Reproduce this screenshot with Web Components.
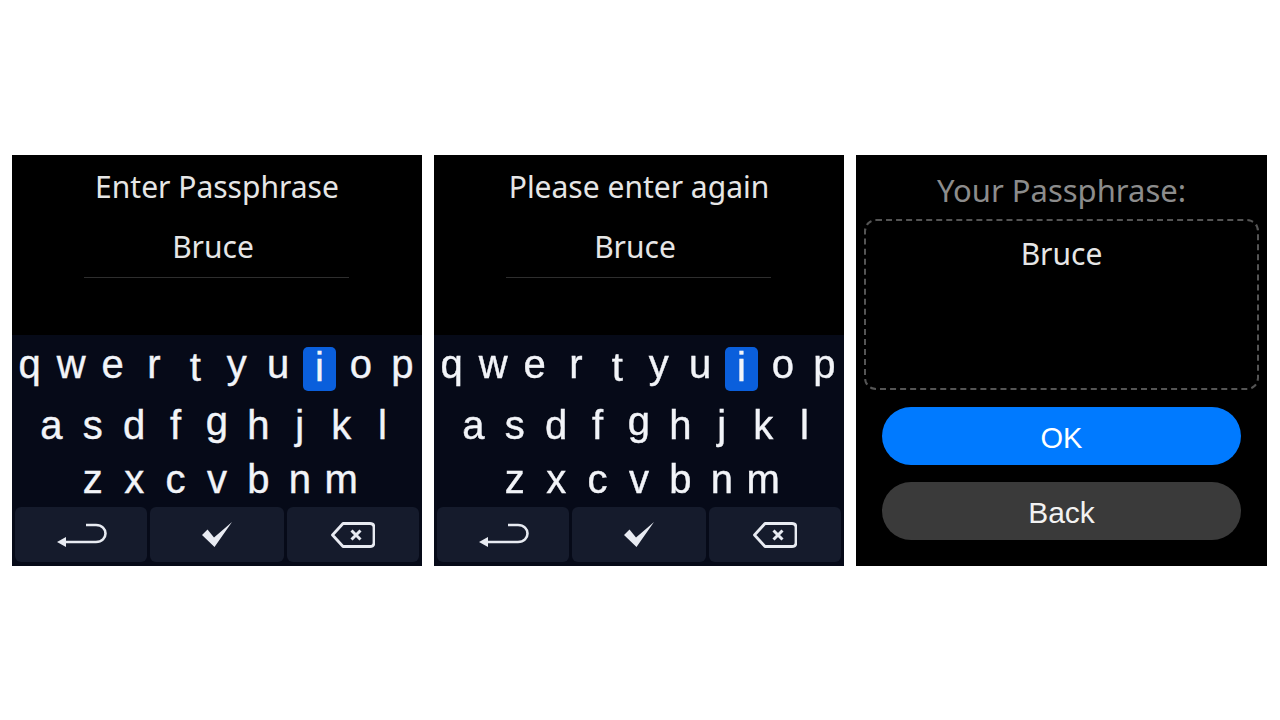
<!DOCTYPE html>
<html lang="en">
<head>
<meta charset="utf-8">
<title>Passphrase</title>
<style>
  html, body { margin: 0; height: 100%; background: #fff; }
</style>
</head>
<body>
<screen-row>
  <passphrase-entry title-text="Enter Passphrase" value="Bruce"></passphrase-entry>
  <passphrase-entry title-text="Please enter again" value="Bruce"></passphrase-entry>
  <passphrase-confirm value="Bruce"></passphrase-confirm>
</screen-row>

<script>
const TITLE_FONT = '"Noto Sans", "Open Sans", sans-serif';
const KEY_FONT = '"Liberation Sans", Arial, sans-serif';

class ScreenRow extends HTMLElement {
  constructor() {
    super();
    this.attachShadow({ mode: 'open' });
    this.shadowRoot.innerHTML = `
      <style>
        :host {
          display: grid;
          grid-template-columns: 410px 410px 411px;
          gap: 12px;
          height: 720px;
          padding: 155px 13px 154px 12px;
          box-sizing: border-box;
          /* the source is a soft video frame */
          filter: blur(0.45px);
        }
      </style>
      <slot></slot>
    `;
  }
}

class SoftKey extends HTMLElement {
  constructor() {
    super();
    this.attachShadow({ mode: 'open' });
    this.shadowRoot.innerHTML = `
      <style>
        :host {
          display: flex;
          align-items: flex-start;
          justify-content: center;
          width: 41.4px;
          flex: none;
          color: #f2f4f8;
          font: 40px/1 ${KEY_FONT};
          -webkit-text-stroke: 0.4px #f2f4f8;
        }
        span {
          display: flex;
          align-items: center;
          justify-content: center;
          width: 33px;
          height: 44px;
          padding-bottom: 10px;
          border-radius: 5px;
          box-sizing: border-box;
        }
        :host([active]) span { background: #0a5fdc; }
        /* t, i and g sit off the baseline on the device */
        :host([low]) span { padding-bottom: 5px; }
        :host([high]) span { padding-bottom: 18px; }
      </style>
      <span><slot></slot></span>
    `;
  }
}

class ActionKey extends HTMLElement {
  constructor() {
    super();
    this.attachShadow({ mode: 'open' });
    this.shadowRoot.innerHTML = `
      <style>
        :host {
          display: flex;
          align-items: center;
          justify-content: center;
          flex: 1;
          background: #151b2c;
          border-radius: 6px;
          color: #e8ebf2;
        }
        :host(:nth-child(2)) { flex-grow: 1.015; }
      </style>
      <slot></slot>
    `;
  }
}

class KeyBoard extends HTMLElement {
  constructor() {
    super();
    this.attachShadow({ mode: 'open' });
    const rows = ['qwertyuiop', 'asdfghjkl', 'zxcvbnm'];
    const letters = rows.map(row => {
      const keys = [...row].map(ch => {
        let attrs = '';
        if (ch === 'i') attrs = ' active low';
        if (ch === 't') attrs = ' low';
        if (ch === 'g') attrs = ' high';
        return `<soft-key${attrs}>${ch}</soft-key>`;
      }).join('');
      return `<div class="row">${keys}</div>`;
    }).join('');
    this.shadowRoot.innerHTML = `
      <style>
        :host {
          display: block;
          height: 231px;
          padding: 12px 0 4px;
          box-sizing: border-box;
          background: #060a18;
          overflow: hidden;
        }
        .row {
          display: flex;
          justify-content: center;
          height: 44px;
        }
        .row:nth-of-type(1) { margin-bottom: 17px; padding-right: 2px; }
        .row:nth-of-type(2) { margin-bottom: 10px; }
        .row:nth-of-type(3) { margin-bottom: 1px; }
        .actions {
          display: flex;
          gap: 3px;
          height: 55px;
          margin: 0 3px;
        }
        svg { display: block; fill: none; stroke: currentColor; }
      </style>
      ${letters}
      <div class="actions">
        <action-key>
          <svg width="52" height="28" viewBox="0 0 52 28" stroke-width="2.6">
            <path d="M8 21H41C47 21 50.500 17 50.500 12.500C50.500 8 47 4 41 4H31"/>
            <path d="M2 21L11 16V26Z" fill="currentColor" stroke="none"/>
          </svg>
        </action-key>
        <action-key>
          <svg width="30" height="25" viewBox="0 0 30 25">
            <path d="M0 13L5.500 7.500L12 15.500L30 0L12.500 25Z" fill="currentColor" stroke="none"/>
          </svg>
        </action-key>
        <action-key>
          <svg width="44" height="26" viewBox="0 0 44 26" stroke-width="2.8" stroke-linejoin="round">
            <path d="M12 1.500H39Q43 1.500 43 5.500V20.500Q43 24.500 39 24.500H12L1.500 13Z"/>
            <path d="M20.500 8.500L29.500 17.500M29.500 8.500L20.500 17.500" stroke-width="3"/>
          </svg>
        </action-key>
      </div>
    `;
  }
}

class PassphraseEntry extends HTMLElement {
  constructor() {
    super();
    this.attachShadow({ mode: 'open' });
  }

  connectedCallback() {
    this.shadowRoot.innerHTML = `
      <style>
        :host {
          display: flex;
          flex-direction: column;
          min-width: 0;
          background: #000;
          color: #e6e6e6;
          font: 30px/40px ${TITLE_FONT};
        }
        .top {
          flex: 1;
          display: flex;
          flex-direction: column;
          align-items: center;
          padding-top: 12px;
        }
        .value {
          margin-top: 20px;
          padding-right: 8px;
        }
        .line {
          width: 265px;
          height: 1px;
          margin: 10px 2px 0 0;
          background: #2e2e2e;
        }
      </style>
      <div class="top">
        <div>${this.getAttribute('title-text')}</div>
        <div class="value">${this.getAttribute('value')}</div>
        <div class="line"></div>
      </div>
      <key-board></key-board>
    `;
  }
}

class PillButton extends HTMLElement {
  constructor() {
    super();
    this.attachShadow({ mode: 'open' });
    this.shadowRoot.innerHTML = `
      <style>
        :host {
          display: flex;
          align-items: center;
          justify-content: center;
          height: 58px;
          padding-top: 4px;
          box-sizing: border-box;
          border-radius: 29px;
          background: #3a3a3a;
          color: #f2f2f2;
          font: 30px/1 ${KEY_FONT};
        }
        :host([primary]) { background: #007aff; color: #fff; font-size: 29px; }
      </style>
      <slot></slot>
    `;
  }
}

class PassphraseConfirm extends HTMLElement {
  constructor() {
    super();
    this.attachShadow({ mode: 'open' });
  }

  connectedCallback() {
    this.shadowRoot.innerHTML = `
      <style>
        :host {
          display: flex;
          flex-direction: column;
          min-width: 0;
          background: #000;
          font: 30px/40px ${TITLE_FONT};
        }
        .title {
          text-align: center;
          color: #8c8c8c;
          font-size: 31px;
          padding-top: 15px;
          height: 64px;
          box-sizing: border-box;
        }
        .box {
          height: 171px;
          margin: 0 8px;
          padding-top: 13px;
          box-sizing: border-box;
          border: 2px dashed #555;
          border-radius: 12px;
          text-align: center;
          color: #e6e6e6;
        }
        .buttons {
          display: flex;
          flex-direction: column;
          gap: 17px;
          margin: 17px 26px 0;
        }
      </style>
      <div class="title">Your Passphrase:</div>
      <div class="box">${this.getAttribute('value')}</div>
      <div class="buttons">
        <pill-button primary>OK</pill-button>
        <pill-button>Back</pill-button>
      </div>
    `;
  }
}

customElements.define('screen-row', ScreenRow);
customElements.define('soft-key', SoftKey);
customElements.define('action-key', ActionKey);
customElements.define('key-board', KeyBoard);
customElements.define('passphrase-entry', PassphraseEntry);
customElements.define('pill-button', PillButton);
customElements.define('passphrase-confirm', PassphraseConfirm);
</script>
</body>
</html>
